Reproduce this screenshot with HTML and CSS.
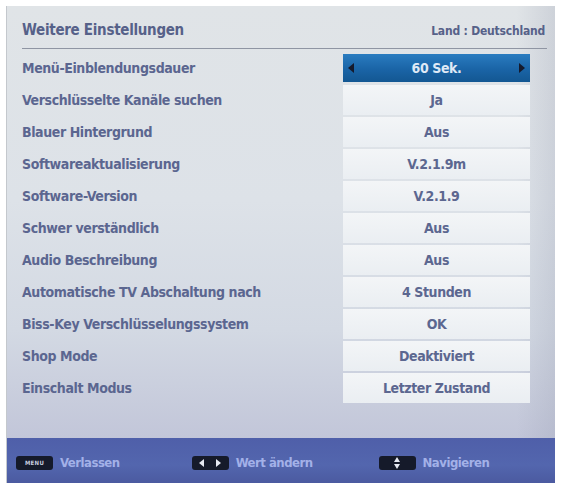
FILE: index.html
```html
<!DOCTYPE html>
<html lang="de">
<head>
<meta charset="utf-8">
<title>Weitere Einstellungen</title>
<link rel="stylesheet" href="styles.css">
</head>
<body>
<div class="screen">
  <div class="panel">
    <div class="header">
      <span class="title">Weitere Einstellungen</span>
      <span class="country">Land : Deutschland</span>
    </div>
    <ul class="rows">
      <li class="row active"><span class="label">Menü-Einblendungsdauer</span><span class="value"><svg class="arr" width="6" height="10" viewBox="0 0 6 10"><path d="M6 0 L0 5 L6 10 Z"/></svg><span>60 Sek.</span><svg class="arr" width="6" height="10" viewBox="0 0 6 10"><path d="M0 0 L6 5 L0 10 Z"/></svg></span></li>
      <li class="row"><span class="label">Verschlüsselte Kanäle suchen</span><span class="value">Ja</span></li>
      <li class="row"><span class="label">Blauer Hintergrund</span><span class="value">Aus</span></li>
      <li class="row"><span class="label">Softwareaktualisierung</span><span class="value">V.2.1.9m</span></li>
      <li class="row"><span class="label">Software-Version</span><span class="value">V.2.1.9</span></li>
      <li class="row"><span class="label">Schwer verständlich</span><span class="value">Aus</span></li>
      <li class="row"><span class="label">Audio Beschreibung</span><span class="value">Aus</span></li>
      <li class="row"><span class="label">Automatische TV Abschaltung nach</span><span class="value">4 Stunden</span></li>
      <li class="row"><span class="label">Biss-Key Verschlüsselungssystem</span><span class="value">OK</span></li>
      <li class="row"><span class="label">Shop Mode</span><span class="value">Deaktiviert</span></li>
      <li class="row"><span class="label">Einschalt Modus</span><span class="value">Letzter Zustand</span></li>
    </ul>
  </div>
  <div class="footer">
    <div class="hint"><span class="key key-menu">MENU</span><span class="hint-text">Verlassen</span></div>
    <div class="hint hint-mid"><span class="key"><svg width="22" height="8" viewBox="0 0 22 8"><path d="M5 0 L0 4 L5 8 Z M17 0 L22 4 L17 8 Z" fill="#e6e9f2"/></svg></span><span class="hint-text">Wert ändern</span></div>
    <div class="hint hint-right"><span class="key"><svg width="6" height="12" viewBox="0 0 6 12"><path d="M3 0 L6 5 L0 5 Z M0 7 L6 7 L3 12 Z" fill="#e6e9f2"/></svg></span><span class="hint-text">Navigieren</span></div>
  </div>
</div>
</body>
</html>
```
FILE: styles.css
```css
html, body {
  margin: 0;
  padding: 0;
  background: #ffffff;
}
body {
  width: 565px;
  height: 487px;
  overflow: hidden;
  font-family: "DejaVu Sans Condensed", "DejaVu Sans", sans-serif;
}
.screen {
  margin: 6px 10px 0 7px;
  height: 477px;
  display: flex;
  flex-direction: column;
  box-shadow: -1px 0 0 #c4c8cd;
}
.panel {
  flex: 1;
  background:
    linear-gradient(to right, rgba(255,255,255,0) 0%, rgba(255,255,255,0) 93%, rgba(150,155,175,0.25) 100%),
    linear-gradient(to bottom, #e0e4e7 0%, #dde2e8 45%, #d3d9e3 75%, #c2c6d9 100%);
  padding: 0 8px 0 15px;
  display: flex;
  flex-direction: column;
}
.header {
  height: 43px;
  display: flex;
  justify-content: space-between;
  align-items: flex-end;
  padding: 0 2px 9px 0;
  box-sizing: border-box;
  border-bottom: 1px solid #8f95a3;
  color: #566189;
  font-weight: bold;
}
.title {
  font-size: 15px;
  letter-spacing: -0.3px;
}
.country {
  font-size: 12px;
  letter-spacing: -0.2px;
  padding-bottom: 1px;
}
.rows {
  list-style: none;
  margin: 4px 0 0 0;
  padding: 0;
}
.row {
  display: grid;
  grid-template-columns: 1fr 187px;
  height: 30px;
  margin-bottom: 2px;
  padding-right: 17px;
  align-items: center;
  font-size: 14px;
  letter-spacing: -0.4px;
  font-weight: bold;
  color: #5b6690;
}
.value {
  height: 30px;
  display: flex;
  align-items: center;
  justify-content: center;
  background: linear-gradient(to bottom, #f3f5f7, #eaeef2);
  color: #5c6790;
}
.active .value {
  background: linear-gradient(to bottom, #2a7cc0 0%, #1a64a6 55%, #135792 100%);
  color: #dfe9f6;
  justify-content: space-between;
  padding: 0 5px;
  box-sizing: border-box;
  height: 28px;
}
.arr {
  fill: #151a2c;
}
.footer {
  height: 45px;
  background: linear-gradient(to bottom, #4f5fa9 0%, #5366ae 60%, #4b5aa0 100%);
  display: flex;
  align-items: center;
  padding: 4px 0 0 9px;
  box-sizing: border-box;
  font-weight: bold;
}
.hint {
  display: flex;
  align-items: center;
  gap: 7px;
}
.hint-mid {
  margin-left: 72px;
}
.hint-right {
  margin-left: 66px;
}
.key {
  width: 37px;
  height: 14px;
  background: #151a2a;
  border-radius: 3px;
  display: flex;
  align-items: center;
  justify-content: center;
}
.key-menu {
  font-size: 6px;
  color: #c9cfe0;
  letter-spacing: 0.3px;
}
.hint-text {
  font-size: 13px;
  letter-spacing: -0.5px;
  color: #a3b1e8;
}
```
